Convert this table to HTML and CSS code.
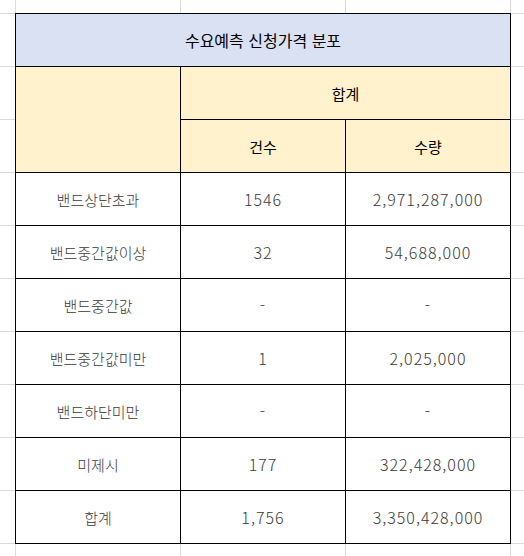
FILE: index.html
```html
<!DOCTYPE html>
<html lang="ko">
<head>
<meta charset="utf-8">
<link rel="stylesheet" href="styles.css">
</head>
<body>
<div class="sheet">
  <div class="cell title span3">수요예측 신청가격 분포</div>
  <div class="cell head corner"></div>
  <div class="cell head span2">합계</div>
  <div class="cell head">건수</div>
  <div class="cell head">수량</div>

  <div class="cell data">밴드상단초과</div>
  <div class="cell data num">1546</div>
  <div class="cell data num">2,971,287,000</div>

  <div class="cell data">밴드중간값이상</div>
  <div class="cell data num">32</div>
  <div class="cell data num">54,688,000</div>

  <div class="cell data">밴드중간값</div>
  <div class="cell data num">-</div>
  <div class="cell data num">-</div>

  <div class="cell data">밴드중간값미만</div>
  <div class="cell data num">1</div>
  <div class="cell data num">2,025,000</div>

  <div class="cell data">밴드하단미만</div>
  <div class="cell data num">-</div>
  <div class="cell data num">-</div>

  <div class="cell data">미제시</div>
  <div class="cell data num">177</div>
  <div class="cell data num">322,428,000</div>

  <div class="cell data">합계</div>
  <div class="cell data num">1,756</div>
  <div class="cell data num">3,350,428,000</div>
</div>
</body>
</html>
```

FILE: styles.css
```css
html, body {
  margin: 0;
  padding: 0;
}
body {
  width: 524px;
  height: 556px;
  overflow: hidden;
  background-color: #fff;
  background-image:
    linear-gradient(to right, #d9d9d9 1px, transparent 1px),
    linear-gradient(to bottom, #d9d9d9 1px, transparent 1px);
  background-size: 165px 100%, 100% 53px;
  background-position: 15px 0, 0 13px;
  font-family: "Noto Sans CJK KR", "Noto Sans", sans-serif;
}
.sheet {
  margin: 13px 0 0 15px;
  width: 495px;
  display: grid;
  grid-template-columns: repeat(3, 165px);
  grid-auto-rows: 53px;
  border-left: 1px solid #000;
  border-top: 1px solid #000;
}
.cell {
  border-right: 1px solid #000;
  border-bottom: 1px solid #000;
  display: flex;
  align-items: center;
  justify-content: center;
  font-size: 15px;
  background: #fff;
}
.span3 { grid-column: span 3; }
.span2 { grid-column: span 2; }
.corner { grid-row: span 2; }
.title {
  background: #d9e1f2;
  color: #000;
  font-size: 16px;
  font-weight: 400;
}
.head {
  background: #fff2cc;
  color: #000;
  font-weight: 400;
}
.data {
  color: #3a3a3a;
  font-weight: 300;
}
.num {
  font-size: 16px;
  letter-spacing: 1px;
}
```
